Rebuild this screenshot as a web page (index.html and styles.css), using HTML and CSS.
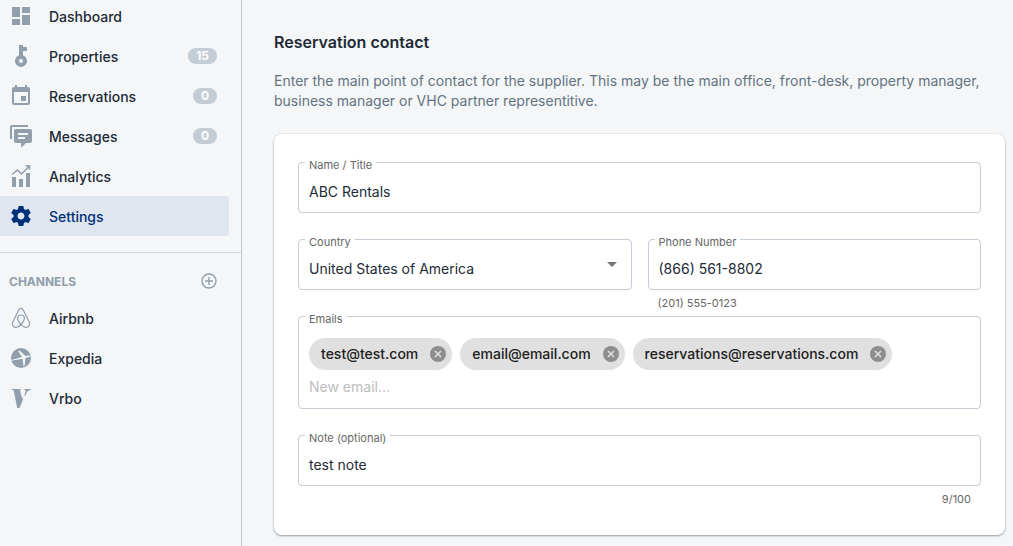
FILE: index.html
```html
<!doctype html>
<html lang="en">
  <head>
    <meta charset="UTF-8" />
    <meta name="viewport" content="width=device-width, initial-scale=1.0" />
    <title>Settings - Reservation contact</title>
    <link rel="stylesheet" href="styles.css">
  </head>
  <body>
    <aside class="sidebar">
      <nav class="menu">
        <a class="item" href="#">
          <svg class="icon" viewBox="0 0 24 24"><path d="M3 13h8V3H3v10zm0 8h8v-6H3v6zm10 0h8V11h-8v10zm0-18v6h8V3h-8z"/></svg>
          <span class="text">Dashboard</span>
        </a>
        <a class="item" href="#">
          <svg class="icon" viewBox="0 0 24 24"><path fill-rule="evenodd" d="M10 1h4v2h4v4h-4v4.300A6 6 0 1 1 10 11.300zM12 15a2 2 0 1 0 0 4 2 2 0 0 0 0-4z"/></svg>
          <span class="text">Properties</span>
          <span class="badge">15</span>
        </a>
        <a class="item" href="#">
          <svg class="icon" viewBox="0 0 24 24"><path d="M17 12h-5v5h5v-5zM16 1v2H8V1H6v2H5c-1.110 0-1.990.9-1.990 2L3 19c0 1.100.890 2 2 2h14c1.100 0 2-.9 2-2V5c0-1.100-.9-2-2-2h-1V1h-2zm3 18H5V8h14v11z"/></svg>
          <span class="text">Reservations</span>
          <span class="badge">0</span>
        </a>
        <a class="item" href="#">
          <svg class="icon" viewBox="0 0 24 24"><path fill-rule="evenodd" d="M1 15V3a2 2 0 0 1 2-2h16v2H3v12zM7 5h14a2 2 0 0 1 2 2v10a2 2 0 0 1-2 2h-4l-4 4h-1v-4H7a2 2 0 0 1-2-2V7a2 2 0 0 1 2-2zm2 4v2h10V9zm0 4v2h7v-2z"/></svg>
          <span class="text">Messages</span>
          <span class="badge">0</span>
        </a>
        <a class="item" href="#">
          <svg class="icon" viewBox="0 0 24 24"><path d="M3 13h4v10H3zM10 15h4v8h-4zM17 9h4v14h-4z"/><path class="line" d="M3 10.500l5.500-4.500 4 4 7.500-7.500M16.500 1.700h4v4"/></svg>
          <span class="text">Analytics</span>
        </a>
        <a class="item active" href="#">
          <svg class="icon" viewBox="0 0 24 24"><path d="M19.430 12.980c.040-.320.070-.640.070-.980s-.030-.660-.070-.980l2.110-1.650c.190-.150.240-.420.120-.640l-2-3.460c-.120-.220-.390-.3-.610-.220l-2.490 1c-.520-.4-1.080-.730-1.690-.980l-.380-2.650C14.460 2.180 14.250 2 14 2h-4c-.250 0-.460.180-.490.420l-.380 2.650c-.610.250-1.170.590-1.690.980l-2.490-1c-.230-.090-.490 0-.610.220l-2 3.460c-.130.220-.070.490.120.640l2.110 1.650c-.040.320-.070.650-.070.980s.030.660.070.980l-2.110 1.650c-.190.150-.240.420-.120.640l2 3.460c.120.220.390.3.610.220l2.490-1c.520.4 1.080.730 1.690.980l.380 2.650c.030.240.240.420.490.420h4c.250 0 .460-.180.490-.420l.380-2.650c.610-.250 1.170-.590 1.690-.980l2.490 1c.230.090.490 0 .610-.220l2-3.460c.120-.220.070-.490-.120-.640l-2.110-1.650zM12 15.500c-1.930 0-3.500-1.570-3.500-3.500s1.570-3.500 3.500-3.500 3.500 1.570 3.500 3.500-1.570 3.500-3.500 3.500z"/></svg>
          <span class="text">Settings</span>
        </a>
      </nav>

      <div class="channels-head">
        <h2 class="text">CHANNELS</h2>
        <button type="button" class="add" aria-label="Add channel">
          <svg viewBox="0 0 16 16"><circle cx="8" cy="8" r="7"/><path d="M8 4v8M4 8h8"/></svg>
        </button>
      </div>

      <nav>
        <a class="item" href="#">
          <svg class="icon" viewBox="0 0 24 24"><path class="thin" d="M12 18.500C9.500 15.500 8.600 14 8.600 12.400a3.400 3.400 0 0 1 6.800 0C15.400 14 14.500 15.500 12 18.500c-2 2.500-3.700 3.200-5.400 2.900C4 21 2.700 18.600 3.700 16.200L9.600 4.200C10.300 2.800 11 2.400 12 2.400s1.700.4 2.400 1.800l5.900 12c1 2.400-.3 4.800-2.900 5.200-1.700.3-3.400-.4-5.400-2.900z"/></svg>
          <span class="text">Airbnb</span>
        </a>
        <a class="item" href="#">
          <svg class="icon" viewBox="0 0 24 24"><circle cx="12" cy="12" r="10"/><path class="plane" d="M1.500 14.200l4.500-1.200 7-2.100-3.800-6 1.300-.4 6 5.500 3.700-.6c1.200-.1 1.700.9.5 1.300l-4.300 1.300-.7 7.600-1.200.4-.9-7.300-7 1.300-5.100.8z"/></svg>
          <span class="text">Expedia</span>
        </a>
        <a class="item" href="#">
          <svg class="icon" viewBox="0 0 24 24"><path d="M2.800 3h8.900v.8l-.7.400 1.200 5.200 1.800 3.600-1.700 5-2 4H8.200L4.700 4.600 2.800 3.800zM15.300 3h6.500v.8c-2.500.5-3.800 1.800-5.300 5.900h-.8c-.2-1.700.4-3 .9-4.600-.2-.9-.6-1.200-1.300-1.300z"/></svg>
          <span class="text">Vrbo</span>
        </a>
      </nav>
    </aside>

    <main>
      <h1>Reservation contact</h1>
      <p class="intro">
        Enter the main point of contact for the supplier. This may be the main office, front-desk, property manager, business manager or VHC partner representitive.
      </p>

      <form class="card" onsubmit="return false;">
        <div class="field">
          <label for="name">Name / Title</label>
          <input id="name" type="text" value="ABC Rentals" />
        </div>

        <div class="row">
          <div class="field">
            <label for="country">Country</label>
            <select id="country">
              <option>United States of America</option>
              <option>Canada</option>
            </select>
            <svg class="arrow" viewBox="0 0 10 5"><path d="M0 0l5 5 5-5z"/></svg>
          </div>
          <div>
            <div class="field">
              <label for="phone">Phone Number</label>
              <input id="phone" type="tel" value="(866) 561-8802" />
            </div>
            <div class="hint">(201) 555-0123</div>
          </div>
        </div>

        <div class="field emails">
          <label for="email">Emails</label>
          <div class="chips">
            <span class="chip">test@test.com
              <button type="button" aria-label="Remove test@test.com"><svg viewBox="0 0 16 16"><circle cx="8" cy="8" r="8"/><path d="M5 5l6 6M11 5l-6 6"/></svg></button>
            </span>
            <span class="chip">email@email.com
              <button type="button" aria-label="Remove email@email.com"><svg viewBox="0 0 16 16"><circle cx="8" cy="8" r="8"/><path d="M5 5l6 6M11 5l-6 6"/></svg></button>
            </span>
            <span class="chip">reservations@reservations.com
              <button type="button" aria-label="Remove reservations@reservations.com"><svg viewBox="0 0 16 16"><circle cx="8" cy="8" r="8"/><path d="M5 5l6 6M11 5l-6 6"/></svg></button>
            </span>
          </div>
          <input id="email" type="email" placeholder="New email..." />
        </div>

        <div class="field">
          <label for="note">Note (optional)</label>
          <input id="note" type="text" maxlength="100" value="test note" />
        </div>
        <div class="hint count">9/100</div>
      </form>
    </main>
  </body>
</html>
```
FILE: styles.css
```css
* {
  box-sizing: border-box;
}

body {
  margin: 0;
  min-height: 100vh;
  display: flex;
  background: #f4f6f8;
  color: #212b36;
  font-family: Inter, Roboto, "Liberation Sans", sans-serif;
  font-size: 14px;
  line-height: 20px;
}

input,
select,
button {
  font: inherit;
  color: inherit;
}

button {
  display: flex;
  padding: 0;
  border: none;
  background: none;
  cursor: pointer;
}

/* sidebar */

.sidebar {
  flex: none;
  width: 242px;
  border-right: 1px solid #c4c8cc;
}

.menu {
  margin-top: -4px;
  padding-bottom: 16px;
  border-bottom: 1px solid #d3d6d9;
}

.item {
  display: flex;
  align-items: center;
  gap: 16px;
  height: 40px;
  margin-right: 12px;
  padding: 0 12px 0 9px;
  border-radius: 0 4px 4px 0;
  color: inherit;
  font-weight: 500;
  text-decoration: none;
}

.item.active {
  background: #dfe6ee;
  color: #00307a;
}

.text {
  padding-top: 2px;
}

.icon {
  flex: none;
  width: 24px;
  height: 24px;
  fill: #919eab;
}

.active .icon {
  fill: #00307a;
}

.icon .line,
.icon .thin {
  fill: none;
  stroke: #919eab;
  stroke-width: 1.5;
}

.icon .thin {
  stroke-width: 1.2;
}

.icon .plane {
  fill: #f4f6f8;
}

.badge {
  margin-left: auto;
  padding: 0 8px;
  border-radius: 8px;
  background: #c4cdd5;
  color: #fff;
  font-size: 12px;
  font-weight: 700;
  line-height: 16px;
}

.channels-head {
  display: flex;
  align-items: center;
  justify-content: space-between;
  padding: 17px 24px 6px 9px;
}

.channels-head h2 {
  margin: 0;
  color: #919eab;
  font-size: 12px;
  font-weight: 700;
}

.add svg {
  width: 16px;
  height: 16px;
  fill: none;
  stroke: #919eab;
  stroke-width: 1.4;
}

/* content */

main {
  flex: 1;
  min-width: 0;
  padding: 32px 8px 12px 32px;
}

h1 {
  margin: 0 0 19px;
  font-size: 16px;
  font-weight: 600;
  line-height: 20px;
}

.intro {
  margin: 0 0 23px;
  color: #637381;
}

.card {
  padding: 28px 24px;
  border-radius: 8px;
  background: #fff;
  box-shadow: 0 1px 2px rgba(33, 43, 54, 0.4), 0 0 2px rgba(33, 43, 54, 0.15);
}

.row {
  display: grid;
  grid-template-columns: 1fr 1fr;
  align-items: start;
  gap: 16px;
  margin: 26px 0 5px;
}

.field {
  position: relative;
  border: 1px solid #c4cdd5;
  border-radius: 4px;
}

.field label {
  position: absolute;
  top: -4px;
  left: 6px;
  padding: 0 4px;
  background: #fff;
  color: #666;
  font-size: 11px;
  line-height: 12px;
}

.field input,
.field select {
  display: block;
  width: 100%;
  height: 49px;
  padding: 7px 10px 0;
  border: none;
  border-radius: 4px;
  outline: none;
  background: none;
}

.field select {
  padding-top: 8px;
  appearance: none;
}

.field:focus-within {
  border-color: #00307a;
}

.arrow {
  position: absolute;
  top: 22px;
  right: 14px;
  width: 10px;
  height: 5px;
  fill: #757575;
  pointer-events: none;
}

.hint {
  padding: 5px 10px 0;
  color: #666;
  font-size: 11px;
  line-height: 16px;
}

.count {
  text-align: right;
}

.emails {
  margin-bottom: 26px;
  padding: 21px 0 6px;
}

.chips {
  display: flex;
  flex-wrap: wrap;
  gap: 8px;
  padding: 0 10px;
}

.chip {
  display: flex;
  align-items: center;
  gap: 12px;
  height: 32px;
  padding: 0 6px 0 12px;
  border-radius: 16px;
  background: #e0e0e0;
  color: #212121;
  font-weight: 500;
}

.chip svg {
  width: 16px;
  height: 16px;
  fill: #8e8e8e;
  stroke: #e0e0e0;
  stroke-width: 1.5;
}

.chip circle {
  stroke: none;
}

.emails input {
  height: 32px;
  padding: 0 10px;
}

.emails input::placeholder {
  color: #bdbdbd;
}
```
